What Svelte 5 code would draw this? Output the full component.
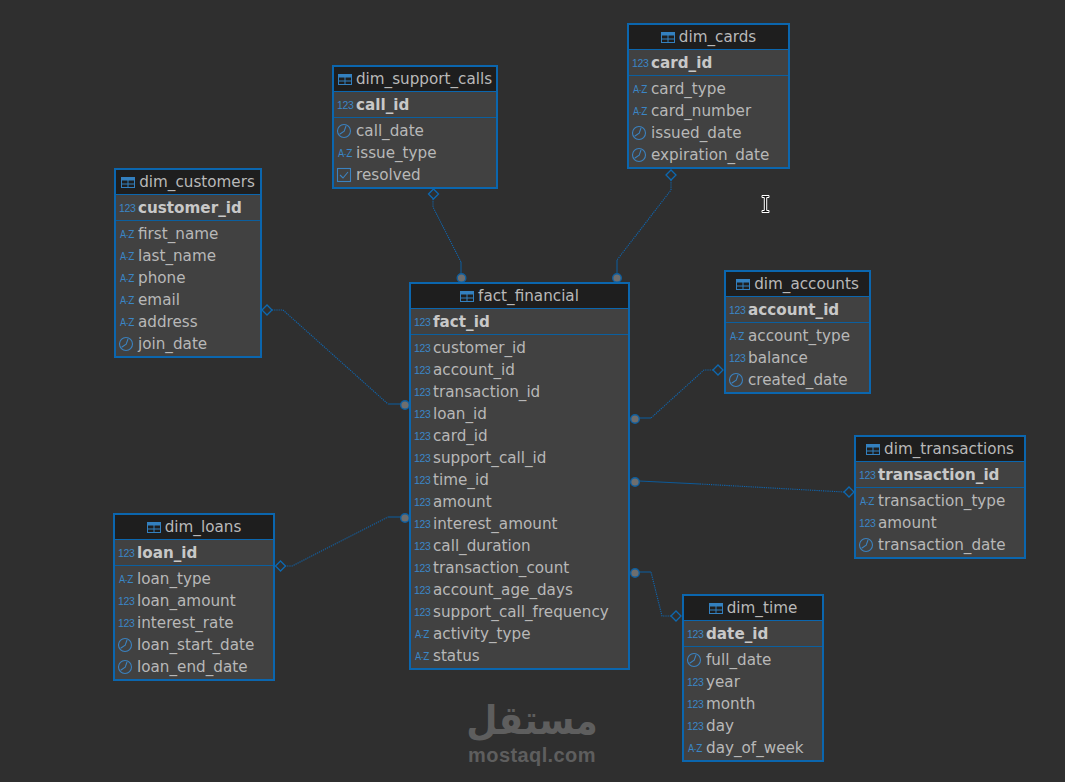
<script>
  const nodes = [
    { name: 'dim_cards', x: 627, y: 23, w: 163, rows: [['n','card_id'],['a','card_type'],['a','card_number'],['c','issued_date'],['c','expiration_date']] },
    { name: 'dim_support_calls', x: 332, y: 65, w: 166, rows: [['n','call_id'],['c','call_date'],['a','issue_type'],['b','resolved']] },
    { name: 'dim_customers', x: 114, y: 168, w: 148, rows: [['n','customer_id'],['a','first_name'],['a','last_name'],['a','phone'],['a','email'],['a','address'],['c','join_date']] },
    { name: 'fact_financial', x: 409, y: 282, w: 221, rows: [['n','fact_id'],['n','customer_id'],['n','account_id'],['n','transaction_id'],['n','loan_id'],['n','card_id'],['n','support_call_id'],['n','time_id'],['n','amount'],['n','interest_amount'],['n','call_duration'],['n','transaction_count'],['n','account_age_days'],['n','support_call_frequency'],['a','activity_type'],['a','status']] },
    { name: 'dim_accounts', x: 724, y: 270, w: 147, rows: [['n','account_id'],['a','account_type'],['n','balance'],['c','created_date']] },
    { name: 'dim_transactions', x: 854, y: 435, w: 172, rows: [['n','transaction_id'],['a','transaction_type'],['n','amount'],['c','transaction_date']] },
    { name: 'dim_loans', x: 113, y: 513, w: 162, rows: [['n','loan_id'],['a','loan_type'],['n','loan_amount'],['n','interest_rate'],['c','loan_start_date'],['c','loan_end_date']] },
    { name: 'dim_time', x: 682, y: 594, w: 142, rows: [['n','date_id'],['c','full_date'],['n','year'],['n','month'],['n','day'],['a','day_of_week']] }
  ];
  const edges = [
    { d: [[433,199],[433,207],[461,262]], end: [461,274], dot: [461.5,278], dia: [433.5,194] },
    { d: [[671,180],[671,190],[617,260]], end: [617,274], dot: [617,278], dia: [671,175] },
    { d: [[272,310],[283,310],[388,404]], end: [401,404], dot: [405,405], dia: [267,310] },
    { d: [[285,566],[292,566],[388,517]], end: [401,517], dot: [405,518], dia: [280.5,566] },
    { d: [[713,370],[704,370],[651,418]], end: [639,418], dot: [635,419], dia: [718,370] },
    { d: [[844,492],[700,484]], end: [639,481], dot: [635,482], dia: [849,492] },
    { d: [[671,616],[662,616],[651,572]], end: [639,572], dot: [635,573], dia: [676,616] }
  ];
  const pts = (d) => d.map((p) => p.join(',')).join(' ');
  const last = (d) => d[d.length - 1];
</script>

{#snippet tableIcon()}
  <svg class="ticon" viewBox="0 0 14 11" width="14" height="11" aria-hidden="true">
    <rect x="0" y="0" width="14" height="11" fill="#3380bf" />
    <rect x="1" y="3.5" width="5.5" height="3" fill="#1e1e1e" />
    <rect x="7.5" y="3.5" width="5.5" height="3" fill="#1e1e1e" />
    <rect x="1" y="7.5" width="5.5" height="2.5" fill="#1e1e1e" />
    <rect x="7.5" y="7.5" width="5.5" height="2.5" fill="#1e1e1e" />
  </svg>
{/snippet}

{#snippet rowIcon(kind)}
  {#if kind === 'n'}
    <span class="num">123</span>
  {:else if kind === 'a'}
    <span class="az">A<i>-</i>Z</span>
  {:else if kind === 'c'}
    <svg viewBox="0 0 16 16" width="16" height="16" aria-hidden="true">
      <circle cx="8" cy="8" r="6.5" fill="none" stroke="#3b82c0" stroke-width="1.1" />
      <path d="M10 3 L8.2 8.2 L3.6 11.2" fill="none" stroke="#3b82c0" stroke-width="1.1" />
    </svg>
  {:else}
    <svg viewBox="0 0 16 16" width="16" height="16" aria-hidden="true">
      <rect x="1.5" y="1.5" width="13" height="13" fill="none" stroke="#3b82c0" stroke-width="1.1" />
      <path d="M4 8 L7 11 L12 5" fill="none" stroke="#3b82c0" stroke-width="1.1" />
    </svg>
  {/if}
{/snippet}

<main class="canvas">
  <svg class="links" viewBox="0 0 1065 782" width="1065" height="782" aria-hidden="true">
    {#each edges as e}
      <polyline points={pts(e.d)} fill="none" stroke="#0f66b0" stroke-width="1.1" stroke-dasharray="1.2 1" />
      <polyline points={pts([last(e.d), e.end])} fill="none" stroke="#0d5a98" stroke-width="1.1" />
      <path d="M{e.dia[0] - 5} {e.dia[1]} L{e.dia[0]} {e.dia[1] - 5} L{e.dia[0] + 5} {e.dia[1]} L{e.dia[0]} {e.dia[1] + 5} Z" fill="#2f2f2f" stroke="#0d68b0" stroke-width="1.3" />
      <circle cx={e.dot[0]} cy={e.dot[1]} r="4.3" fill="#6e6e6e" stroke="#0f5f9f" stroke-width="1.4" />
    {/each}
  </svg>

  {#each nodes as n}
    <section class="node" style="left:{n.x}px;top:{n.y}px;width:{n.w}px">
      <header>{@render tableIcon()}<span>{n.name}</span></header>
      <div class="pk">
        <span class="icon">{@render rowIcon(n.rows[0][0])}</span><b>{n.rows[0][1]}</b>
      </div>
      <div class="cols">
        {#each n.rows.slice(1) as r}
          <div class="row"><span class="icon">{@render rowIcon(r[0])}</span><span>{r[1]}</span></div>
        {/each}
      </div>
    </section>
  {/each}

  <div class="mark">
    <div class="ar" dir="rtl" lang="ar">مستقل</div>
    <div class="en">mostaql.com</div>
  </div>

  <svg class="cursor" viewBox="0 0 9 18" width="9" height="18" aria-hidden="true">
    <path d="M1 0.5 H8 V2.5 H5.7 V15.5 H8 V17.5 H1 V15.5 H3.3 V2.5 H1 Z" fill="#111" stroke="#fff" stroke-width="1" />
  </svg>
</main>

<style>
  :global(body) { margin: 0; background: #2f2f2f; }
  .canvas {
    position: relative;
    width: 1065px;
    height: 782px;
    overflow: hidden;
    background: #2f2f2f;
    font-family: "DejaVu Sans", sans-serif;
    font-size: 15.2px;
    color: #b8b8b8;
  }
  .links { position: absolute; left: 0; top: 0; }
  .node {
    position: absolute;
    box-sizing: border-box;
    border: 2px solid #0b66ae;
    background: #414141;
  }
  header {
    height: 24px;
    background: #1e1e1e;
    border-bottom: 1px solid #0b66ae;
    display: flex;
    align-items: center;
    justify-content: center;
    gap: 4px;
    color: #b9b9b9;
  }
  .ticon { flex: none; }
  .pk {
    height: 25px;
    border-bottom: 1px solid #0b5f9f;
    display: flex;
    align-items: center;
    padding-left: 2px;
    color: #c8c8c8;
  }
  .cols { padding: 2px 0 1px; }
  .row {
    height: 22px;
    display: flex;
    align-items: center;
    padding-left: 2px;
  }
  .icon {
    width: 18px;
    height: 16px;
    margin-right: 2px;
    flex: none;
    display: flex;
    align-items: center;
    justify-content: flex-start;
    color: #3b82c0;
  }
  .num {
    margin-left: 1px;
    font-family: "Liberation Sans", sans-serif;
    font-size: 10.5px;
    letter-spacing: -0.3px;
    color: #3b86c6;
  }
  .az {
    font-family: "DejaVu Sans Condensed", "DejaVu Sans", sans-serif;
    font-stretch: condensed;
    font-size: 10px;
    margin-left: 2px;
    letter-spacing: -0.5px;
    color: #3b86c6;
  }
  .az i { font-style: normal; color: #2c6ca3; }
  .mark {
    position: absolute;
    left: 440px;
    top: 696px;
    width: 184px;
    text-align: center;
    color: #5e5e5e;
    font-weight: 700;
  }
  .ar { font-size: 40px; line-height: 48px; font-family: "DejaVu Sans", sans-serif; transform: scaleX(0.9); }
  .en { font-family: "Liberation Sans", sans-serif; font-size: 20px; line-height: 20px; margin-top: 1px; letter-spacing: 0.4px; }
  .cursor { position: absolute; left: 761px; top: 195px; }
</style>
